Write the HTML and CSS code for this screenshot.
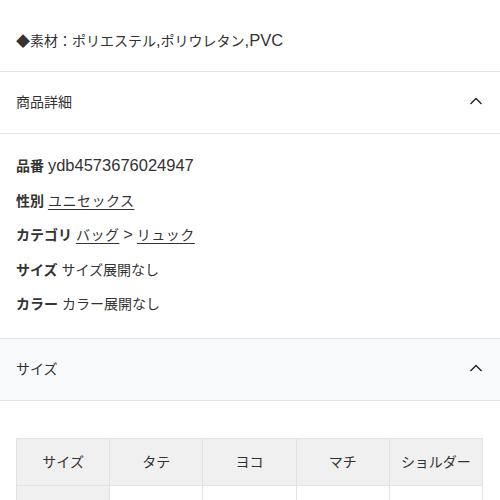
FILE: index.html
```html
<!DOCTYPE html>
<html lang="ja">
<head>
  <meta charset="UTF-8" />
  <meta name="viewport" content="width=device-width, initial-scale=1.0"/>
  <title>商品詳細</title>
  <link rel="stylesheet" href="styles.css">
</head>
<body>
  <div class="page">
    <section class="material">
      <p>◆素材：ポリエステル<span class="en">,</span>ポリウレタン<span class="en">,PVC</span></p>
    </section>

    <section class="accordion">
      <div class="acc-head">
        <span>商品詳細</span>
        <svg class="chevron" width="14" height="10" viewBox="0 0 14 10"><path d="M1.5 8 L7 2.5 L12.5 8" fill="none" stroke="#222" stroke-width="1.4"/></svg>
      </div>
      <div class="details">
        <p><strong>品番</strong> <span class="en">ydb4573676024947</span></p>
        <p><strong>性別</strong> <a href="#">ユニセックス</a></p>
        <p><strong>カテゴリ</strong> <a href="#">バッグ</a> <span class="en">&gt;</span> <a href="#">リュック</a></p>
        <p><strong>サイズ</strong> サイズ展開なし</p>
        <p><strong>カラー</strong> カラー展開なし</p>
      </div>
    </section>

    <section class="accordion">
      <div class="acc-head shaded">
        <span>サイズ</span>
        <svg class="chevron" width="14" height="10" viewBox="0 0 14 10"><path d="M1.5 8 L7 2.5 L12.5 8" fill="none" stroke="#222" stroke-width="1.4"/></svg>
      </div>
      <div class="size-body">
        <table class="size-table">
          <tr>
            <th>サイズ</th>
            <th>タテ</th>
            <th>ヨコ</th>
            <th>マチ</th>
            <th>ショルダー</th>
          </tr>
          <tr>
            <th class="row-head"></th>
            <td></td>
            <td></td>
            <td></td>
            <td></td>
          </tr>
        </table>
      </div>
    </section>
  </div>
</body>
</html>
```

FILE: styles.css
```css
* {
  margin: 0;
  padding: 0;
  box-sizing: border-box;
}

body {
  font-family: "Liberation Sans", "Noto Sans CJK JP", sans-serif;
  font-size: 14px;
  color: #333;
  background: #fff;
}

/* latin glyphs render larger next to the kana in the original */
.en {
  font-size: 16.5px;
  line-height: 1;
}

.material {
  padding: 31px 16px 20px;
  line-height: 20px;
  border-bottom: 1px solid #e6e6e6;
}

.acc-head {
  display: flex;
  justify-content: space-between;
  align-items: center;
  height: 62px;
  padding: 0 16px 3px;
  border-bottom: 1px solid #e6e6e6;
}

.acc-head.shaded {
  background: #f7f9fa;
}

.chevron {
  display: block;
  margin-right: 1px;
}

.details {
  padding: 22px 16px 24px;
  border-bottom: 1px solid #e6e6e6;
}

.details p {
  height: 20px;
  line-height: 20px;
}

.details p + p {
  margin-top: 14.5px;
}

.details strong {
  font-weight: bold;
}

.details a {
  color: #333;
  text-decoration: underline;
  text-underline-offset: 3px;
  letter-spacing: 0.5px;
}

.size-body {
  padding: 37px 16px 20px;
}

.size-table {
  width: 467px;
  border-collapse: collapse;
  table-layout: fixed;
}

.size-table th,
.size-table td {
  border: 1px solid #e3e3e3;
  height: 47px;
  padding-bottom: 2px;
  text-align: center;
  font-weight: normal;
}

.size-table th {
  background: #f0f0f0;
}

.size-table td {
  background: #fff;
}
```
